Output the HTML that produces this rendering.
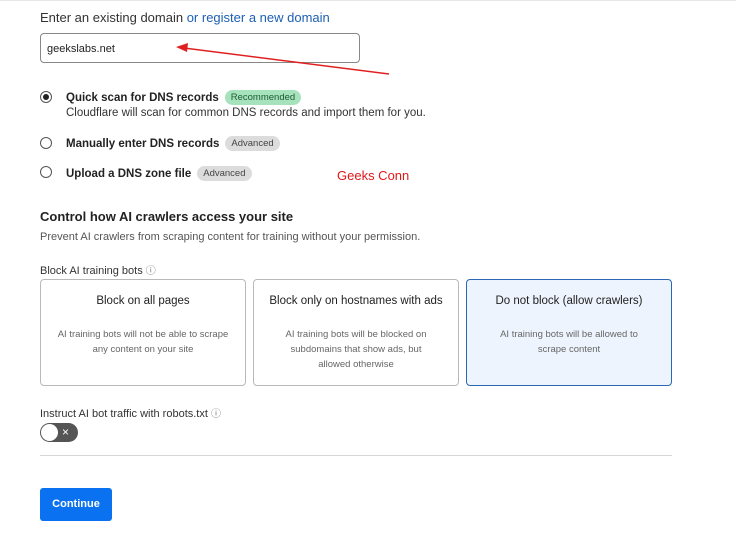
<!DOCTYPE html>
<html><head><meta charset="utf-8"><style>
*{box-sizing:border-box;margin:0;padding:0}
body{width:736px;height:547px;background:#fff;font-family:"Liberation Sans",Arial,sans-serif;color:#222;position:relative;overflow:hidden}
.a{position:absolute;white-space:nowrap}
.radio{position:absolute;width:12px;height:12px;border:1px solid #555;border-radius:50%;background:#fff}
.radio.on::after{content:"";position:absolute;left:2px;top:2px;width:6px;height:6px;border-radius:50%;background:#222}
.b{font-weight:bold;font-size:11.5px;color:#222}
.tag{display:inline-block;font-size:9.5px;padding:2px 6px;border-radius:8px;background:#dcdcdc;color:#444;margin-left:6px;font-weight:normal;vertical-align:1px}
.tag.g{background:#a6e3bc;color:#1c5c33}
.card{position:absolute;top:279px;width:206px;height:107px;border:1px solid #b9b9b9;border-radius:4px;text-align:center}
.card h4{font-weight:normal;font-size:11.5px;margin-top:15px;color:#222}
.card p{font-size:9.5px;color:#666;line-height:15px;margin-top:20px;white-space:normal}
</style></head><body>
<div class="a" style="left:0;top:0;width:736px;height:1px;background:#e6e6e6"></div>
<div class="a" style="left:40px;top:10px;font-size:13px;color:#333">Enter an existing domain <span style="color:#1d5fb4">or register a new domain</span></div>
<div class="a" style="left:40px;top:33px;width:320px;height:30px;border:1px solid #888;border-radius:4px;font-size:11px;padding:9px 6px;color:#222">geekslabs.net</div>
<svg class="a" style="left:170px;top:40px" width="225" height="40"><line x1="219" y1="34" x2="14" y2="8" stroke="#e02020" stroke-width="1.5"/><polygon points="6,7 18,3 17,12" fill="#e02020"/></svg>
<div class="radio on" style="left:40px;top:91px"></div>
<div class="a b" style="left:66px;top:90px">Quick scan for DNS records<span class="tag g">Recommended</span></div>
<div class="a" style="left:66px;top:107px;font-size:11.5px;color:#333">Cloudflare will scan for common DNS records and import them for you.</div>
<div class="radio" style="left:40px;top:137px"></div>
<div class="a b" style="left:66px;top:136px">Manually enter DNS records<span class="tag">Advanced</span></div>
<div class="radio" style="left:40px;top:166px"></div>
<div class="a b" style="left:66px;top:166px">Upload a DNS zone file<span class="tag">Advanced</span></div>
<div class="a" style="left:337px;top:168px;font-size:13px;color:#e01818">Geeks Conn</div>
<div class="a" style="left:40px;top:209px;font-size:13px;font-weight:bold;color:#222">Control how AI crawlers access your site</div>
<div class="a" style="left:40px;top:231px;font-size:11px;color:#555">Prevent AI crawlers from scraping content for training without your permission.</div>
<div class="a" style="left:40px;top:262px;font-size:11px;color:#333">Block AI training bots <span style="font-size:10px;color:#777">ⓘ</span></div>
<div class="card" style="left:40px"><h4>Block on all pages</h4><p style="padding:0 14px">AI training bots will not be able to scrape any content on your site</p></div>
<div class="card" style="left:253px"><h4>Block only on hostnames with ads</h4><p style="padding:0 24px">AI training bots will be blocked on subdomains that show ads, but allowed otherwise</p></div>
<div class="card" style="left:466px;border-color:#2c67b3;background:#eef4fd"><h4>Do not block (allow crawlers)</h4><p style="padding:0 28px">AI training bots will be allowed to scrape content</p></div>
<div class="a" style="left:40px;top:405px;font-size:11px;color:#333">Instruct AI bot traffic with robots.txt <span style="font-size:10px;color:#777">ⓘ</span></div>
<div class="a" style="left:40px;top:423px;width:38px;height:19px;border-radius:10px;background:#555"></div>
<div class="a" style="left:41px;top:424px;width:17px;height:17px;border-radius:50%;background:#fff"></div>
<div class="a" style="left:62px;top:425px;font-size:12px;color:#fff">×</div>
<div class="a" style="left:40px;top:455px;width:632px;height:1px;background:#d6d6d6"></div>
<div class="a" style="left:40px;top:488px;width:72px;height:33px;border-radius:3px;background:#0a72f0;color:#fff;font-size:11px;font-weight:bold;text-align:center;line-height:33px">Continue</div>
</body></html>
